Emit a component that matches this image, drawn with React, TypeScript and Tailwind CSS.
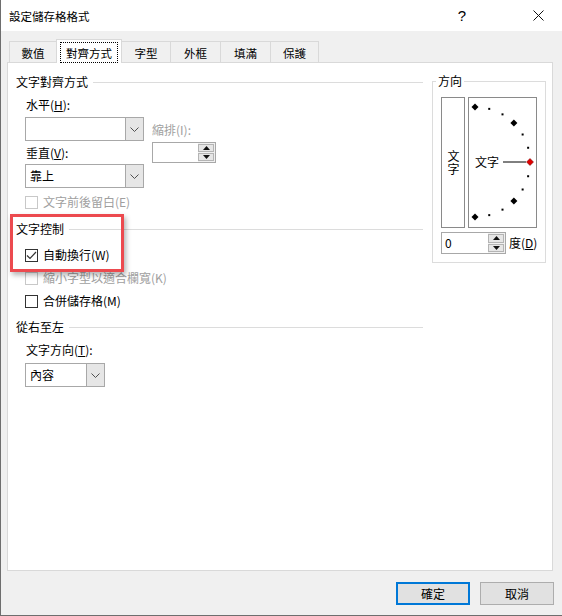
import React from "react";

// small drawings used by the form controls
const Chevron = () => (
  <svg width="9" height="5" viewBox="0 0 9 5">
    <polyline points="0.5,0.5 4.5,4.5 8.5,0.5" fill="none" stroke="#505050" strokeWidth="1" />
  </svg>
);

const Tri = ({ up }: { up?: boolean }) => (
  <svg width="7" height="4" viewBox="0 0 7 4">
    <polygon points={up ? "0,4 7,4 3.5,0" : "0,0 7,0 3.5,4"} fill="#111" />
  </svg>
);

const Select = ({ value, className }: { value?: string; className: string }) => (
  <div className={`flex h-[24px] border border-[#a8a8a8] bg-white ${className}`}>
    <div className="flex flex-1 items-center pl-[4px] text-[12px] leading-4">{value}</div>
    <div className="flex w-[18px] items-center justify-center border-l border-[#a8a8a8] bg-[#e6e6e6]">
      <Chevron />
    </div>
  </div>
);

const Spin = ({ value, className }: { value?: string; className: string }) => (
  <div className={`flex border border-[#a8a8a8] bg-white ${className}`}>
    <div className="flex flex-1 items-center pl-[3px] text-[12px] leading-4">{value}</div>
    <div className="flex w-[17px] flex-col gap-px bg-[#f0f0f0] py-px pr-px">
      <div className="flex flex-1 items-center justify-center border border-[#b4b4b4] bg-[#e6e6e6]">
        <Tri up />
      </div>
      <div className="flex flex-1 items-center justify-center border border-[#b4b4b4] bg-[#e6e6e6]">
        <Tri />
      </div>
    </div>
  </div>
);

const CheckRow = ({
  label,
  checked,
  disabled,
  className,
}: {
  label: string;
  checked?: boolean;
  disabled?: boolean;
  className: string;
}) => (
  <div className={`flex h-4 items-center gap-[5px] ${className}`}>
    <div
      className={`flex h-[13px] w-[13px] items-center justify-center border bg-white ${
        disabled ? "border-[#c8c8c8]" : "border-[#333333]"
      }`}
    >
      {checked && (
        <svg width="11" height="11" viewBox="0 0 11 11">
          <polyline points="1,5.5 4,8.5 10,2" fill="none" stroke="#333" strokeWidth="1.2" />
        </svg>
      )}
    </div>
    <span className={`text-[12px] leading-4 ${disabled ? "text-[#a0a0a0]" : "text-black"}`}>{label}</span>
  </div>
);

const GroupHeader = ({ title, className }: { title: string; className: string }) => (
  <div className={`flex h-4 items-center ${className}`}>
    <span className="text-[12px] leading-4">{title}</span>
    <div className="ml-[5px] h-px flex-1 bg-[#dcdcdc]" />
  </div>
);

const tabs = [
  { label: "數值", w: "w-[48px]" },
  { label: "對齊方式", w: "w-[66px]", active: true },
  { label: "字型", w: "w-[50px]" },
  { label: "外框", w: "w-[51px]" },
  { label: "填滿", w: "w-[51px]" },
  { label: "保護", w: "w-[49px]" },
];

// dial: centre (6,64), radius 55, a mark every 15 degrees
const Dial = () => {
  const marks = [90, 75, 60, 45, 30, 15, 0, -15, -30, -45, -60, -75, -90];
  return (
    <svg width="67" height="129" viewBox="0 0 67 129">
      {marks.map((a) => {
        const r = (a * Math.PI) / 180;
        const x = 6 + 55 * Math.cos(r);
        const y = 64 - 55 * Math.sin(r);
        if (a % 45 === 0) {
          return (
            <polygon
              key={a}
              points={`${x},${y - 3.5} ${x + 3.5},${y} ${x},${y + 3.5} ${x - 3.5},${y}`}
              fill={a === 0 ? "#e00000" : "#000"}
              stroke={a === 0 ? "#600" : "none"}
              strokeWidth="0.5"
            />
          );
        }
        return <rect key={a} x={x - 1} y={y - 1} width="2" height="2" fill="#000" />;
      })}
      <line x1="34" y1="64" x2="57" y2="64" stroke="#000" strokeWidth="1" />
      <text
        x="6"
        y="68.5"
        fontSize="12"
        fontFamily="'Noto Sans CJK TC', sans-serif"
        fill="#000"
      >
        文字
      </text>
    </svg>
  );
};

export default function App() {
  return (
    <div className="flex h-[616px] w-[562px] flex-col border-b border-l border-[#6e6e6e] bg-[#f0f0f0] font-['Noto_Sans_CJK_TC','Noto_Sans',sans-serif] text-black">
      {/* title bar */}
      <div className="flex h-[31px] items-center bg-white pl-[8px]">
        <span className="flex-1 text-[11.5px] leading-4">設定儲存格格式</span>
        <span className="w-[20px] text-center font-['Liberation_Sans',sans-serif] text-[15px] leading-4">?</span>
        <div className="ml-[60px] mr-[18px] flex h-[12px] w-[12px] items-center justify-center">
          <svg width="11" height="11" viewBox="0 0 11 11">
            <path d="M0.5 0.5 L10.5 10.5 M10.5 0.5 L0.5 10.5" stroke="#111" strokeWidth="1" />
          </svg>
        </div>
      </div>

      {/* tabs */}
      <div className="ml-[7px] mt-[8px] flex h-[24px] items-end pl-px">
        {tabs.map((t, i) =>
          t.active ? (
            <div
              key={t.label}
              className={`relative z-10 -ml-px flex h-[24px] ${t.w} flex-col border-l border-r border-t border-[#d9d9d9] bg-white px-[3px] pt-[2px]`}
            >
              <div className="flex flex-1 items-center justify-center border border-dotted border-black text-[11.5px] leading-4">
                {t.label}
              </div>
            </div>
          ) : (
            <div
              key={t.label}
              className={`${i === 0 ? "" : "-ml-px"} flex h-[22px] ${t.w} items-center justify-center border-l border-r border-t border-[#d9d9d9] text-[11.5px] leading-4`}
            >
              {t.label}
            </div>
          )
        )}
      </div>

      {/* panel */}
      <div className="relative -mt-px ml-[6px] flex h-[509px] w-[546px] border border-[#d9d9d9] bg-white pl-[8px] pt-[11px]">
        {/* left column */}
        <div className="flex w-[407px] flex-col">
          <GroupHeader title="文字對齊方式" className="" />
          <div className="flex flex-col pl-[9px]">
            <span className="mt-[7px] pl-px text-[12px] leading-4">水平(<u>H</u>):</span>
            <div className="mt-[4px] flex">
              <div className="flex flex-col">
                <Select className="w-[119px]" />
                <span className="mt-[4px] pl-px text-[12px] leading-4">垂直(<u>V</u>):</span>
                <Select className="mt-[3px] w-[119px]" value="靠上" />
              </div>
              <div className="ml-[8px] flex flex-col">
                <span className="mt-[5px] text-[12px] leading-4 text-[#a0a0a0]">縮排(I):</span>
                <Spin className="mt-[4px] h-[21px] w-[64px]" />
              </div>
            </div>
            <CheckRow className="mt-[6px]" label="文字前後留白(E)" disabled />
          </div>

          <GroupHeader title="文字控制" className="mt-[11px]" />
          <div className="flex flex-col pl-[9px]">
            <CheckRow className="mt-[10px]" label="自動換行(W)" checked />
            <CheckRow className="mt-[7px]" label="縮小字型以適合欄寬(K)" disabled />
            <CheckRow className="mt-[7px]" label="合併儲存格(M)" />
          </div>

          <GroupHeader title="從右至左" className="mt-[10px]" />
          <div className="flex flex-col pl-[9px]">
            <span className="mt-[7px] pl-px text-[12px] leading-4">
              文字方向(<u>T</u>):
            </span>
            <Select className="mt-[5px] w-[80px]" value="內容" />
          </div>
        </div>

        {/* direction group */}
        <fieldset className="-mt-px ml-[9px] h-[190px] w-[114px] border border-[#dcdcdc] pl-[8px]">
          <legend className="ml-[-5px] px-[2px] text-[12px] leading-4">方向</legend>
          <div className="mt-[8px] flex gap-[3px]">
            <div className="flex h-[131px] w-[24px] items-center justify-center border border-[#8a8a8a]">
              <span className="text-[12px] leading-4 tracking-[1px] [writing-mode:vertical-rl]">文字</span>
            </div>
            <div className="h-[131px] w-[69px] border border-[#8a8a8a]">
              <Dial />
            </div>
          </div>
          <div className="mt-[4px] flex items-center">
            <Spin className="h-[22px] w-[65px]" value="0" />
            <span className="ml-[3px] text-[12px] leading-4">
              度(<u>D</u>)
            </span>
          </div>
        </fieldset>

        {/* annotation highlight */}
        <div className="absolute left-[2px] top-[151px] h-[58px] w-[114px] border-[3px] border-[#ec4a4f] shadow-[2px_3px_5px_rgba(0,0,0,0.3)]" />
      </div>

      {/* buttons */}
      <div className="mr-[8px] mt-[11px] flex justify-end gap-[10px]">
        <button className="flex h-[23px] w-[74px] items-center justify-center border-2 border-[#0078d7] bg-[#e1e1e1] text-[12px] leading-4">
          確定
        </button>
        <button className="flex h-[23px] w-[74px] items-center justify-center border border-[#adadad] bg-[#e1e1e1] text-[12px] leading-4">
          取消
        </button>
      </div>
    </div>
  );
}
